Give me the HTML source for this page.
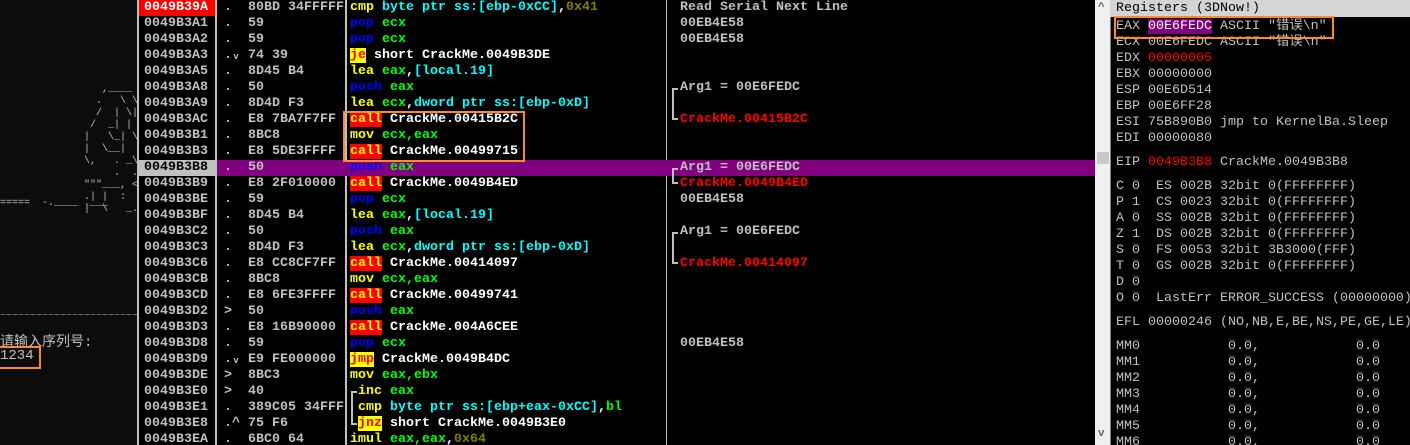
<!DOCTYPE html>
<html><head><meta charset="utf-8"><style>
*{margin:0;padding:0;box-sizing:border-box}
html,body{width:1410px;height:445px;overflow:hidden}
body{background:#000;position:relative;font-family:"Liberation Mono","Noto Sans CJK SC",monospace;font-size:13.33px;font-weight:bold;}
.con{position:absolute;left:0;top:0;width:137px;height:445px;background:#0c0c0c;color:#c0c0c0;overflow:hidden}
.art{position:absolute;font-weight:normal;font-size:10px;line-height:12px;white-space:pre;color:#c0c0c0}
.vl{position:absolute;top:0;height:445px;width:2px;background:#c0c0c0}
.row{position:absolute;left:0;height:16px;line-height:16px;white-space:pre;width:1095px}
.a{position:absolute;left:144px;color:#c0c0c0}
.d{position:absolute;left:224px;color:#c0c0c0}
.b{position:absolute;left:248px;width:98px;overflow:hidden;color:#c0c0c0}
.m{position:absolute;left:350px;color:#fff}
.c{position:absolute;left:680px;color:#c0c0c0}
.y{color:#ffff00}.cy{color:#00ffff}.g{color:#00ff00}.bl{color:#0000ff}.ol{color:#808000}.w{color:#fff}.r{color:#ff0000}
.call{background:#ff0000;color:#ffff00}
.jx{background:#ffff00;color:#ff0000}
.br{position:absolute;left:672px;width:6px;border-left:2px solid #c0c0c0}
.reg{position:absolute;left:1110px;top:0;width:300px;height:445px;background:#000}
.rh{position:absolute;left:1110px;top:0;width:300px;height:17px;background:#d4d4d4;color:#000;line-height:17px;padding-left:6px;font-weight:normal}
.rr{position:absolute;left:1116px;height:16px;line-height:16px;white-space:pre;color:#c0c0c0;font-weight:normal}
.sb{position:absolute;left:1095px;top:0;width:15px;height:445px;background:#f0f0f0}
.box{position:absolute;border:2px solid #ff8a2a}
</style></head><body>
<div class="con">
<div class="art" style="left:78px;top:84px">    ,____
   .   \ \
   /  | \|
  /  _| |
 |   \_| \
 |  \__|  \
 \,   . _\__
      .  .
 """___, &lt;
 .| |  :  _ \
 |  \   _.  \_</div>
<div class="art" style="left:0;top:198px">=====  -.____ .___</div>
<div class="art" style="left:0;top:311px;color:#909090">~~~~~~~~~~~~~~~~~~~~~~~~~~~~</div>
<div style="position:absolute;left:0;top:331px;font-weight:normal;font-size:14px;color:#c0c0c0">请输入序列号:</div>
<div style="position:absolute;left:0;top:348px;font-weight:normal;font-size:14px;color:#c0c0c0">1234</div>
</div>
<div class="box" style="left:-2px;top:346px;width:43px;height:23px"></div>
<div class="vl" style="left:137px"></div>
<div class="vl" style="left:215px"></div>
<div class="vl" style="left:345px"></div>
<div class="vl" style="left:666px;width:1px"></div>

<div style="position:absolute;left:139px;top:0;width:76px;height:16px;background:#ff0000"></div>
<div style="position:absolute;left:139px;top:160px;width:76px;height:16px;background:#c0c0c0"></div>
<div style="position:absolute;left:217px;top:160px;width:878px;height:16px;background:#800080"></div>

<div class="row" style="top:0"><span class="a" style="color:#fff">0049B39A</span><span class="d">.</span><span class="b">80BD 34FFFFFF</span><span class="m"><span class="y">cmp</span> <span class="cy">byte ptr ss:[ebp-0xCC]</span><span class="w">,</span><span class="ol">0x41</span></span><span class="c">Read Serial Next Line</span></div>
<div class="row" style="top:16px"><span class="a">0049B3A1</span><span class="d">.</span><span class="b">59</span><span class="m"><span class="bl">pop</span> <span class="g">ecx</span></span><span class="c">00EB4E58</span></div>
<div class="row" style="top:32px"><span class="a">0049B3A2</span><span class="d">.</span><span class="b">59</span><span class="m"><span class="bl">pop</span> <span class="g">ecx</span></span><span class="c">00EB4E58</span></div>
<div class="row" style="top:48px"><span class="a">0049B3A3</span><span class="d">.ᵥ</span><span class="b">74 39</span><span class="m"><span class="jx">je</span> short CrackMe.0049B3DE</span></div>
<div class="row" style="top:64px"><span class="a">0049B3A5</span><span class="d">.</span><span class="b">8D45 B4</span><span class="m"><span class="y">lea</span> <span class="g">eax</span>,<span class="cy">[local.19]</span></span></div>
<div class="row" style="top:80px"><span class="a">0049B3A8</span><span class="d">.</span><span class="b">50</span><span class="m"><span class="bl">push</span> <span class="g">eax</span></span><span class="c">Arg1 = 00E6FEDC</span></div>
<div class="row" style="top:96px"><span class="a">0049B3A9</span><span class="d">.</span><span class="b">8D4D F3</span><span class="m"><span class="y">lea</span> <span class="g">ecx</span>,<span class="cy">dword ptr ss:[ebp-0xD]</span></span></div>
<div class="row" style="top:112px"><span class="a">0049B3AC</span><span class="d">.</span><span class="b">E8 7BA7F7FF</span><span class="m"><span class="call">call</span> CrackMe.00415B2C</span><span class="c r">CrackMe.00415B2C</span></div>
<div class="row" style="top:128px"><span class="a">0049B3B1</span><span class="d">.</span><span class="b">8BC8</span><span class="m"><span class="y">mov</span> <span class="g">ecx,eax</span></span></div>
<div class="row" style="top:144px"><span class="a">0049B3B3</span><span class="d">.</span><span class="b">E8 5DE3FFFF</span><span class="m"><span class="call">call</span> CrackMe.00499715</span></div>
<div class="row" style="top:160px"><span class="a" style="color:#000">0049B3B8</span><span class="d">.</span><span class="b">50</span><span class="m"><span class="bl">push</span> <span class="g">eax</span></span><span class="c">Arg1 = 00E6FEDC</span></div>
<div class="row" style="top:176px"><span class="a">0049B3B9</span><span class="d">.</span><span class="b">E8 2F010000</span><span class="m"><span class="call">call</span> CrackMe.0049B4ED</span><span class="c r">CrackMe.0049B4ED</span></div>
<div class="row" style="top:192px"><span class="a">0049B3BE</span><span class="d">.</span><span class="b">59</span><span class="m"><span class="bl">pop</span> <span class="g">ecx</span></span><span class="c">00EB4E58</span></div>
<div class="row" style="top:208px"><span class="a">0049B3BF</span><span class="d">.</span><span class="b">8D45 B4</span><span class="m"><span class="y">lea</span> <span class="g">eax</span>,<span class="cy">[local.19]</span></span></div>
<div class="row" style="top:224px"><span class="a">0049B3C2</span><span class="d">.</span><span class="b">50</span><span class="m"><span class="bl">push</span> <span class="g">eax</span></span><span class="c">Arg1 = 00E6FEDC</span></div>
<div class="row" style="top:240px"><span class="a">0049B3C3</span><span class="d">.</span><span class="b">8D4D F3</span><span class="m"><span class="y">lea</span> <span class="g">ecx</span>,<span class="cy">dword ptr ss:[ebp-0xD]</span></span></div>
<div class="row" style="top:256px"><span class="a">0049B3C6</span><span class="d">.</span><span class="b">E8 CC8CF7FF</span><span class="m"><span class="call">call</span> CrackMe.00414097</span><span class="c r">CrackMe.00414097</span></div>
<div class="row" style="top:272px"><span class="a">0049B3CB</span><span class="d">.</span><span class="b">8BC8</span><span class="m"><span class="y">mov</span> <span class="g">ecx,eax</span></span></div>
<div class="row" style="top:288px"><span class="a">0049B3CD</span><span class="d">.</span><span class="b">E8 6FE3FFFF</span><span class="m"><span class="call">call</span> CrackMe.00499741</span></div>
<div class="row" style="top:304px"><span class="a">0049B3D2</span><span class="d">&gt;</span><span class="b">50</span><span class="m"><span class="bl">push</span> <span class="g">eax</span></span></div>
<div class="row" style="top:320px"><span class="a">0049B3D3</span><span class="d">.</span><span class="b">E8 16B90000</span><span class="m"><span class="call">call</span> CrackMe.004A6CEE</span></div>
<div class="row" style="top:336px"><span class="a">0049B3D8</span><span class="d">.</span><span class="b">59</span><span class="m"><span class="bl">pop</span> <span class="g">ecx</span></span><span class="c">00EB4E58</span></div>
<div class="row" style="top:352px"><span class="a">0049B3D9</span><span class="d">.ᵥ</span><span class="b">E9 FE000000</span><span class="m"><span class="jx">jmp</span> CrackMe.0049B4DC</span></div>
<div class="row" style="top:368px"><span class="a">0049B3DE</span><span class="d">&gt;</span><span class="b">8BC3</span><span class="m"><span class="y">mov</span> <span class="g">eax,ebx</span></span></div>
<div class="row" style="top:384px"><span class="a">0049B3E0</span><span class="d">&gt;</span><span class="b">40</span><span class="m" style="left:358px"><span class="y">inc</span> <span class="g">eax</span></span></div>
<div class="row" style="top:400px"><span class="a">0049B3E1</span><span class="d">.</span><span class="b">389C05 34FFFFFF</span><span class="m" style="left:358px"><span class="y">cmp</span> <span class="cy">byte ptr ss:[ebp+eax-0xCC]</span>,<span class="g">bl</span></span></div>
<div class="row" style="top:416px"><span class="a">0049B3E8</span><span class="d">.^</span><span class="b">75 F6</span><span class="m" style="left:358px"><span class="jx">jnz</span> short CrackMe.0049B3E0</span></div>
<div class="row" style="top:432px"><span class="a">0049B3EA</span><span class="d">.</span><span class="b">6BC0 64</span><span class="m"><span class="y">imul</span> <span class="g">eax,eax</span>,<span class="ol">0x64</span></span></div>

<div class="br" style="top:88px;height:32px;border-top:2px solid #c0c0c0;border-bottom:2px solid #c0c0c0"></div>
<div class="br" style="top:168px;height:16px;border-top:2px solid #c0c0c0;border-bottom:2px solid #c0c0c0"></div>
<div class="br" style="top:232px;height:32px;border-top:2px solid #c0c0c0;border-bottom:2px solid #c0c0c0"></div>
<div class="br" style="left:351px;top:391px;height:34px;border-top:2px solid #c0c0c0;border-bottom:2px solid #c0c0c0"></div>

<div class="box" style="left:343px;top:111px;width:182px;height:51px"></div>

<div class="sb"><div style="position:absolute;left:2px;top:152px;width:12px;height:12px;background:#c8c8c8"></div><div style="position:absolute;left:3px;top:2px;color:#606060;font-size:11px">^</div><div style="position:absolute;left:3px;top:428px;color:#606060;font-size:11px">v</div></div>
<div class="reg"></div>
<div class="vl" style="left:1110px;width:1px;background:#808080"></div>
<div class="rh">Registers (3DNow!)</div>
<div class="rr" style="top:19px">EAX <span style="background:#800080;color:#fff">00E6FEDC</span> ASCII "错误\n"</div>
<div class="rr" style="top:35px">ECX 00E6FEDC ASCII "错误\n"</div>
<div class="rr" style="top:51px">EDX <span class="r">00000005</span></div>
<div class="rr" style="top:67px">EBX 00000000</div>
<div class="rr" style="top:83px">ESP 00E6D514</div>
<div class="rr" style="top:99px">EBP 00E6FF28</div>
<div class="rr" style="top:115px">ESI 75B890B0 jmp to KernelBa.Sleep</div>
<div class="rr" style="top:131px">EDI 00000080</div>
<div class="rr" style="top:155px">EIP <span class="r">0049B3B8</span> CrackMe.0049B3B8</div>
<div class="rr" style="top:179px">C 0  ES 002B 32bit 0(FFFFFFFF)</div>
<div class="rr" style="top:195px">P 1  CS 0023 32bit 0(FFFFFFFF)</div>
<div class="rr" style="top:211px">A 0  SS 002B 32bit 0(FFFFFFFF)</div>
<div class="rr" style="top:227px">Z 1  DS 002B 32bit 0(FFFFFFFF)</div>
<div class="rr" style="top:243px">S 0  FS 0053 32bit 3B3000(FFF)</div>
<div class="rr" style="top:259px">T 0  GS 002B 32bit 0(FFFFFFFF)</div>
<div class="rr" style="top:275px">D 0</div>
<div class="rr" style="top:291px">O 0  LastErr ERROR_SUCCESS (00000000)</div>
<div class="rr" style="top:315px">EFL 00000246 (NO,NB,E,BE,NS,PE,GE,LE)</div>
<div class="rr" style="top:339px">MM0           0.0,            0.0</div>
<div class="rr" style="top:355px">MM1           0.0,            0.0</div>
<div class="rr" style="top:371px">MM2           0.0,            0.0</div>
<div class="rr" style="top:387px">MM3           0.0,            0.0</div>
<div class="rr" style="top:403px">MM4           0.0,            0.0</div>
<div class="rr" style="top:419px">MM5           0.0,            0.0</div>
<div class="rr" style="top:435px">MM6           0.0,            0.0</div>
<div class="box" style="left:1114px;top:16px;width:220px;height:23px"></div>
</body></html>
